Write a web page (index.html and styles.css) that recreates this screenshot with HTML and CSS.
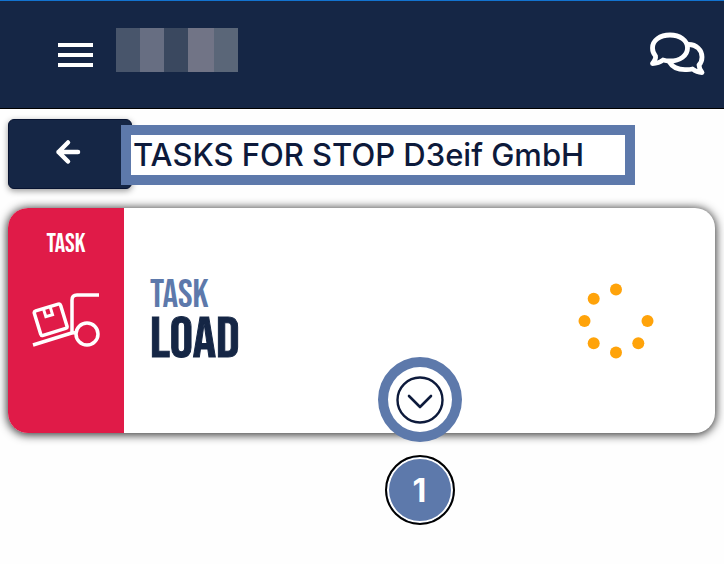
FILE: index.html
```html
<!DOCTYPE html>
<html lang="en">
<head>
    <meta charset="UTF-8">
    <meta name="viewport" content="width=device-width, initial-scale=1.0">
    <title>Tasks for stop</title>
    <link rel="stylesheet" href="styles.css">
</head>
<body>
    <header class="topbar">
        <button class="icon-button menu-button" aria-label="Menu">
            <span></span>
            <span></span>
            <span></span>
        </button>
        <div class="user-name">
            <span class="block-a"></span>
            <span class="block-b"></span>
            <span class="block-c"></span>
            <span class="block-d"></span>
            <span class="block-e"></span>
        </div>
        <button class="icon-button chat-button" aria-label="Messages">
            <svg width="56" height="44" viewBox="0 0 56 44" fill="none" stroke="#fff" stroke-width="4.800" stroke-linejoin="round" stroke-linecap="round">
                <path d="M20 3C29.800 3 37.500 8.500 37.500 16C37.500 23.500 29.800 29 20 29C17.500 29 15 28.600 13 28C10 30.500 6.500 31.500 2.500 31.500C4.500 29 6 26.500 5.500 24C3.300 21.500 2.500 19 2.500 16C2.500 8.500 10 3 20 3Z"/>
                <path d="M38.500 12.500C46.500 12.500 52 18 52 25C52 28 51 31 49 33C49 36 50.500 38.500 52 40.500C48.500 40.500 45.500 39.500 42.500 37C40 37.600 37.500 37.800 35 37.600C27.500 37.600 22 34.500 19.500 30"/>
            </svg>
        </button>
    </header>

    <main class="content">
        <div class="stop-row">
            <button class="back-button" aria-label="Back">
                <svg width="26" height="26" viewBox="0 0 26 26" fill="none" stroke="#fff" stroke-width="4.500" stroke-linecap="round" stroke-linejoin="round">
                    <path d="M13 3.500L3.500 13L13 22.500M3.500 13H23"/>
                </svg>
            </button>
            <h1 class="stop-title">TASKS FOR STOP D3eif GmbH</h1>
        </div>

        <article class="task-card">
            <div class="task-type">
                <span class="type-label">TASK</span>
                <svg width="68" height="56" viewBox="0 0 68 56" fill="none" stroke="#fff" stroke-width="3.500">
                    <path d="M67 3H45Q40 3 40 8V41"/>
                    <path d="M1 53L38 41.500Q41 40.500 44 41"/>
                    <circle cx="55" cy="42" r="11"/>
                    <g transform="rotate(-17 18.500 28)">
                        <rect x="5" y="15" width="27.500" height="25.500" rx="2"/>
                        <path d="M15 15V23.500H22V15" stroke-width="3"/>
                    </g>
                </svg>
            </div>
            <div class="task-body">
                <div class="task-text">
                    <span class="task-kind">TASK</span>
                    <h2 class="task-name">LOAD</h2>
                </div>
                <svg class="spinner" width="76" height="76" viewBox="0 0 76 76" fill="#ffa30a" role="img" aria-label="Open">
                    <circle cx="38" cy="6.500" r="6"/>
                    <circle cx="15.700" cy="15.700" r="6"/>
                    <circle cx="6.500" cy="38" r="6"/>
                    <circle cx="15.700" cy="60.300" r="6"/>
                    <circle cx="38" cy="69.500" r="6"/>
                    <circle cx="60.300" cy="60.300" r="6"/>
                    <circle cx="69.500" cy="38" r="6"/>
                </svg>
                <div class="expand">
                    <button class="expand-button" aria-label="Show details">
                        <svg width="48" height="48" viewBox="0 0 48 48" fill="none" stroke="#0d1a3b" stroke-linecap="round" stroke-linejoin="round">
                            <circle cx="24" cy="24" r="22.500" stroke-width="2.400"/>
                            <path d="M13 20L24 31L35 20" stroke-width="2.600"/>
                        </svg>
                    </button>
                    <span class="step-number">1</span>
                </div>
            </div>
        </article>
    </main>
</body>
</html>
```
FILE: styles.css
```css
* {
    box-sizing: border-box;
}
body {
    min-height: 100vh;
    margin: 0;
    background-color: #fefefe;
    color: #0d1a3b;
    font-family: Inter, "Liberation Sans", sans-serif;
}
button {
    padding: 0;
    border: none;
    font: inherit;
    cursor: pointer;
}
h1, h2 {
    margin: 0;
}
svg {
    display: block;
}

/* top bar */
.topbar {
    display: flex;
    align-items: flex-start;
    height: 109px;
    padding: 27px 18px 0 58px;
    background-color: #152645;
    border-top: 1px solid #1273d0;
    border-bottom: 1px solid #000;
}
.icon-button {
    background: none;
}
.menu-button {
    display: flex;
    flex-direction: column;
    gap: 6px;
    width: 35px;
    margin-top: 15px;
}
.menu-button span {
    height: 4px;
    background-color: #fff;
}
.user-name {
    display: flex;
    height: 44px;
    margin-left: 23px;
}
.user-name span {
    width: 24px;
}
.user-name .block-a {
    background-color: #48556b;
}
.user-name .block-b {
    background-color: #676e82;
}
.user-name .block-c {
    background-color: #3a485f;
}
.user-name .block-d {
    width: 26px;
    background-color: #717486;
}
.user-name .block-e {
    background-color: #5a6678;
}
.chat-button {
    margin-top: 4px;
    margin-left: auto;
}

/* stop title */
.content {
    padding: 10px 9px 40px 8px;
}
.stop-row {
    display: flex;
    align-items: center;
}
.back-button {
    display: flex;
    align-items: center;
    justify-content: center;
    width: 124px;
    height: 70px;
    padding-right: 4px;
    padding-bottom: 4px;
    background-color: #152645;
    border: 1px solid #071331;
    border-radius: 6px;
    box-shadow: 0 2px 6px rgba(0,0,0,0.4);
}
.stop-title {
    position: relative;
    width: 514px;
    height: 60px;
    margin-top: 2px;
    margin-left: -11px;
    padding-left: 2px;
    border: 10px solid #5d79ab;
    background-color: #fff;
    font-size: 31px;
    font-weight: 500;
    line-height: 40px;
    white-space: nowrap;
}

/* task card */
.task-card {
    display: flex;
    height: 225px;
    margin-top: 19px;
    background-color: #fff;
    border-radius: 20px;
    box-shadow: 0 1px 10px 1px rgba(0,0,0,0.8);
}
.task-type {
    display: flex;
    flex-direction: column;
    align-items: center;
    gap: 32px;
    width: 116px;
    padding-top: 22px;
    background-color: #e01b48;
    border-radius: 20px 0 0 20px;
    color: #fff;
}
.type-label, .task-kind, .task-name {
    font-family: "Bebas Neue", "Liberation Sans Narrow", "Liberation Sans", sans-serif;
    font-weight: normal;
}
.type-label {
    font-size: 26px;
    line-height: 30px;
}
.task-body {
    position: relative;
    display: flex;
    flex: 1;
    align-items: center;
    justify-content: space-between;
    padding: 0 61px 0 26px;
}
.task-text {
    padding-top: 4px;
}
.task-kind {
    display: block;
    color: #5d79ab;
    font-size: 39px;
    line-height: 34px;
}
.task-name {
    color: #152645;
    font-size: 58px;
    line-height: 54px;
    -webkit-text-stroke: 1px currentColor;
}
.expand {
    position: absolute;
    top: 149px;
    left: 0;
    right: 0;
    display: flex;
    flex-direction: column;
    align-items: center;
    gap: 13px;
    pointer-events: none;
}
.expand-button {
    display: flex;
    align-items: center;
    justify-content: center;
    width: 84px;
    height: 85px;
    background-color: #fff;
    border: 10px solid #5d79ab;
    border-radius: 50%;
    pointer-events: auto;
}
.step-number {
    width: 70px;
    height: 70px;
    border: 2px solid #000;
    border-radius: 50%;
    background-color: #5d79ab;
    box-shadow: inset 0 0 0 2px #fff;
    color: #fff;
    font-size: 32px;
    font-weight: bold;
    line-height: 68px;
    text-align: center;
}
```
